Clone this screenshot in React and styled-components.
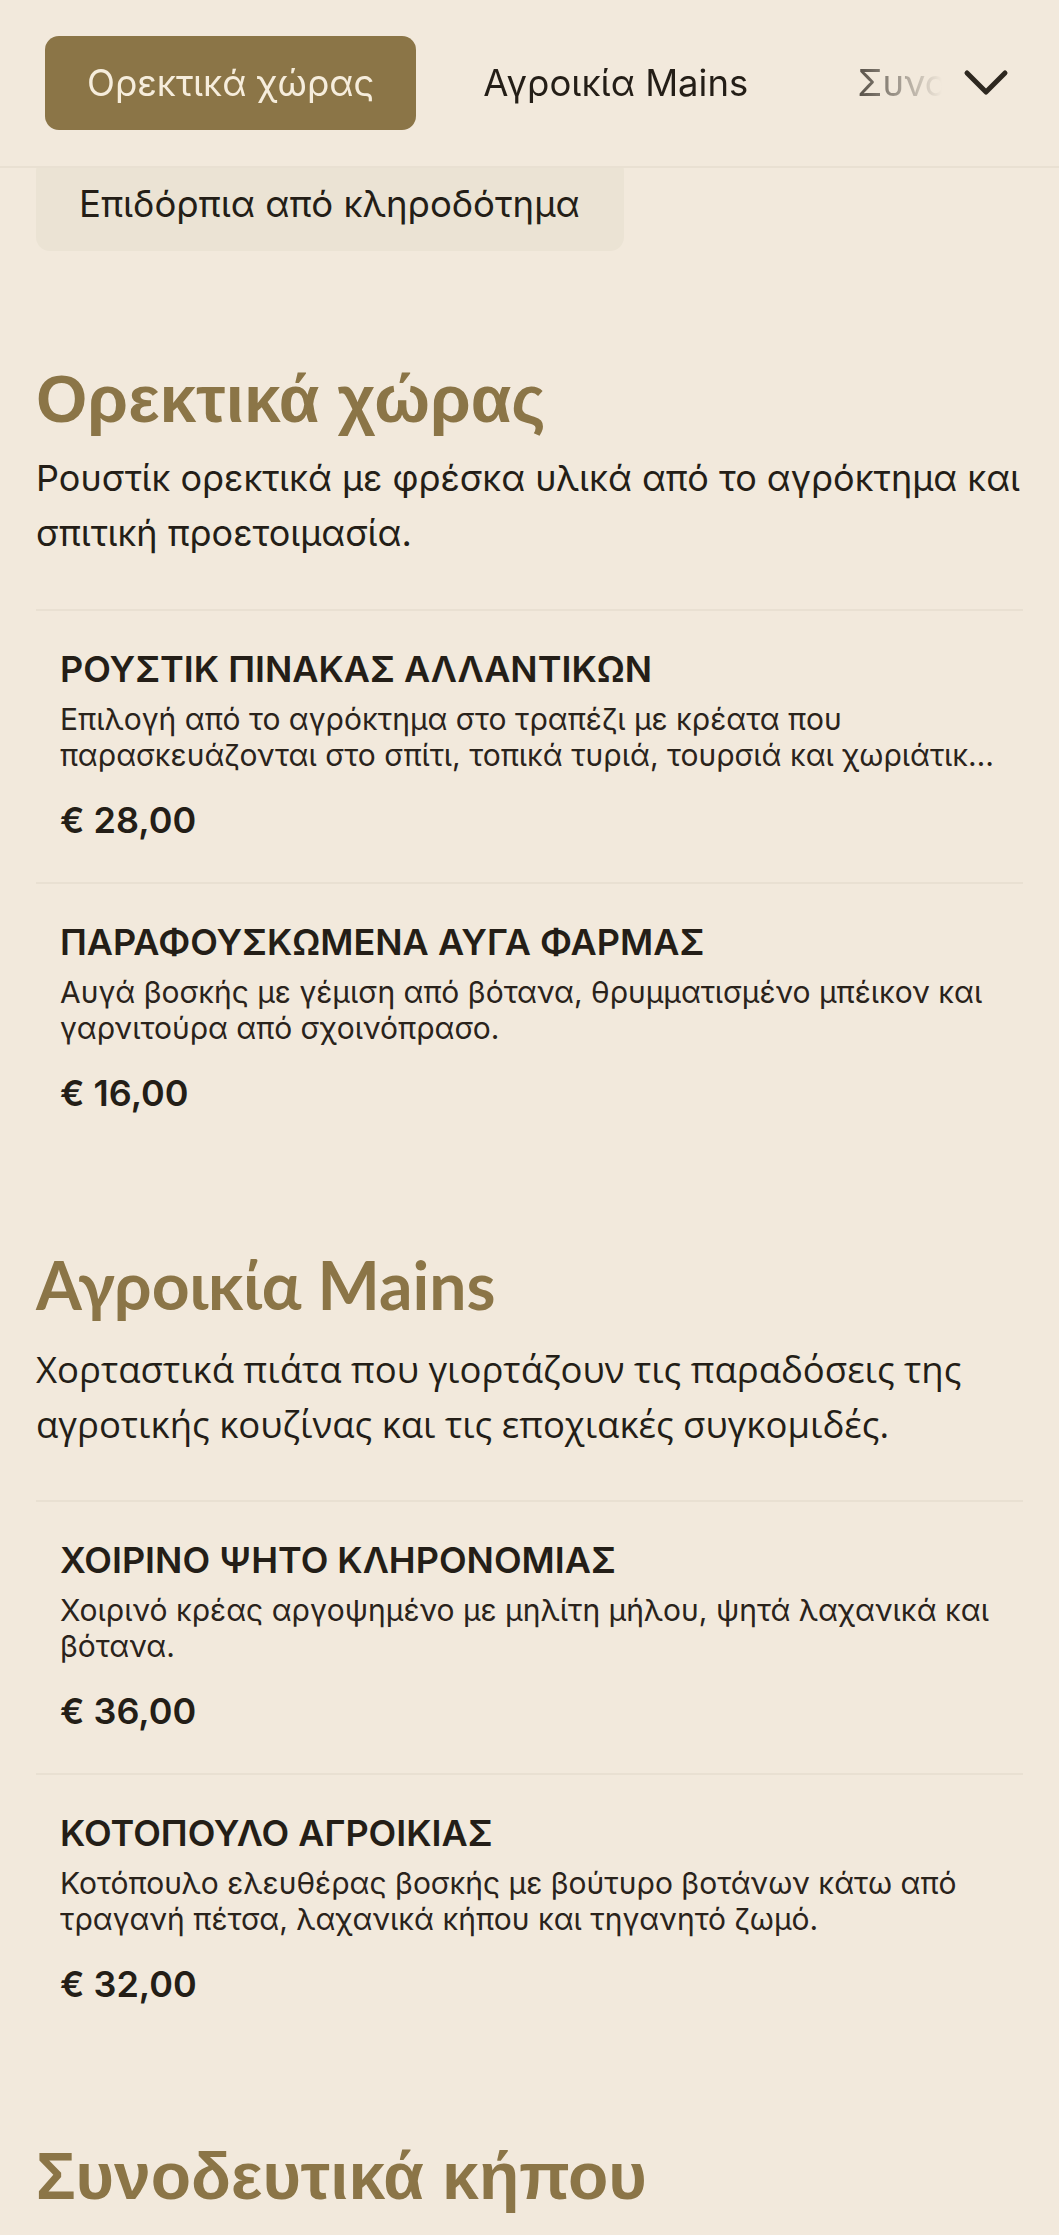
import React from "react";
import styled, { createGlobalStyle } from "styled-components";

const GlobalStyle = createGlobalStyle`
  html, body {
    margin: 0;
    padding: 0;
    background: #f2e9dc;
  }
  body {
    font-family: Inter, "Liberation Sans", "Noto Sans", sans-serif;
    color: #241e17;
    -webkit-font-smoothing: antialiased;
  }
  * { box-sizing: border-box; }
`;

const Page = styled.div`
  min-height: 2235px;
  background: #f2e9dc;
`;

const Header = styled.header`
  position: relative;
  z-index: 2;
  display: flex;
  align-items: center;
  height: 168px;
  padding: 0 43px 0 45px;
  background: #f2e9dc;
  border-bottom: 2px solid #e9e0d2;
`;

const TabStrip = styled.nav`
  flex: 1;
  min-width: 0;
  display: flex;
  gap: 25px;
  overflow: hidden;
  -webkit-mask-image: linear-gradient(to right, #000 calc(100% - 125px), transparent calc(100% - 14px));
  mask-image: linear-gradient(to right, #000 calc(100% - 125px), transparent calc(100% - 14px));
`;

const Tab = styled.button`
  flex-shrink: 0;
  height: 94px;
  padding: 0 42px;
  border: none;
  border-radius: 14px;
  font-family: Inter, "Liberation Sans", sans-serif;
  font-size: 36.5px;
  font-weight: 400;
  white-space: nowrap;
  background: ${(p) => (p.$active ? "#8b7547" : "transparent")};
  color: ${(p) => (p.$active ? "#f6eddc" : "#241e17")};
`;

const MenuButton = styled.button`
  flex-shrink: 0;
  width: 60px;
  height: 60px;
  display: flex;
  align-items: center;
  justify-content: center;
  padding: 0;
  border: none;
  background: transparent;
  color: #2e2820;
`;

const Main = styled.main`
  position: relative;
  z-index: 1;
  padding: 0 36px 40px;
`;

const OverflowPill = styled.div`
  display: inline-flex;
  align-items: center;
  height: 94px;
  margin-top: -11px;
  margin-bottom: 18px;
  padding: 0 44px 0 43px;
  border-radius: 14px;
  background: #ebe3d4;
  font-size: 36.5px;
  white-space: nowrap;
`;

const Section = styled.section`
  padding-top: 88px;
`;

const SectionTitle = styled.h2`
  margin: 0;
  font-family: ${(p) => p.$font || '"Liberation Sans", Arial, sans-serif'};
  font-size: 66px;
  line-height: 84px;
  font-weight: 700;
  color: #8b7547;
`;

const SectionIntro = styled.p`
  margin: ${(p) => p.$top || "10px"} 0 48px;
  font-family: ${(p) => p.$font || 'Inter, "Liberation Sans", sans-serif'};
  font-size: ${(p) => p.$size || "36px"};
  line-height: 55px;
  color: #241e17;
`;

const ItemList = styled.div`
  display: flex;
  flex-direction: column;
`;

const Item = styled.article`
  border-top: 2px solid #e9e0d2;
  padding: 37px 24px 40px;
`;

const ItemName = styled.h3`
  margin: 0;
  font-size: 36px;
  line-height: 43px;
  font-weight: 600;
  color: #241e17;
`;

const ItemDesc = styled.p`
  margin: 10px 0 0;
  font-size: 30px;
  line-height: 36px;
  color: #2a231b;
  display: -webkit-box;
  -webkit-line-clamp: 2;
  -webkit-box-orient: vertical;
  overflow: hidden;
`;

const Price = styled.div`
  margin-top: 26px;
  font-size: 36px;
  line-height: 43px;
  font-weight: 600;
  color: #241e17;
`;

const Chevron = () => (
  <svg width="46" height="30" viewBox="0 0 46 30" fill="none">
    <polyline
      points="4,5 23,24 42,5"
      stroke="currentColor"
      strokeWidth="5"
      strokeLinecap="round"
      strokeLinejoin="round"
    />
  </svg>
);

const sections = [
  {
    title: "Ορεκτικά χώρας",
    intro:
      "Ρουστίκ ορεκτικά με φρέσκα υλικά από το αγρόκτημα και σπιτική προετοιμασία.",
    items: [
      {
        name: "ΡΟΥΣΤΙΚ ΠΙΝΑΚΑΣ ΑΛΛΑΝΤΙΚΩΝ",
        desc:
          "Επιλογή από το αγρόκτημα στο τραπέζι με κρέατα που παρασκευάζονται στο σπίτι, τοπικά τυριά, τουρσιά και χωριάτικο ψωμί.",
        price: "€ 28,00",
      },
      {
        name: "ΠΑΡΑΦΟΥΣΚΩΜΕΝΑ ΑΥΓΑ ΦΑΡΜΑΣ",
        desc:
          "Αυγά βοσκής με γέμιση από βότανα, θρυμματισμένο μπέικον και γαρνιτούρα από σχοινόπρασο.",
        price: "€ 16,00",
      },
    ],
  },
  {
    title: "Αγροικία Mains",
    titleFont: 'Lato, "Open Sans", sans-serif',
    introFont: '"Open Sans", "Noto Sans", sans-serif',
    introSize: "36.5px",
    introTop: "15px",
    intro:
      "Χορταστικά πιάτα που γιορτάζουν τις παραδόσεις της αγροτικής κουζίνας και τις εποχιακές συγκομιδές.",
    items: [
      {
        name: "ΧΟΙΡΙΝΟ ΨΗΤΟ ΚΛΗΡΟΝΟΜΙΑΣ",
        desc: "Χοιρινό κρέας αργοψημένο με μηλίτη μήλου, ψητά λαχανικά και βότανα.",
        price: "€ 36,00",
      },
      {
        name: "ΚΟΤΟΠΟΥΛΟ ΑΓΡΟΙΚΙΑΣ",
        desc:
          "Κοτόπουλο ελευθέρας βοσκής με βούτυρο βοτάνων κάτω από τραγανή πέτσα, λαχανικά κήπου και τηγανητό ζωμό.",
        price: "€ 32,00",
      },
    ],
  },
  {
    title: "Συνοδευτικά κήπου",
    intro: "",
    items: [],
  },
];

export default function App() {
  return (
    <Page>
      <GlobalStyle />
      <Header>
        <TabStrip>
          <Tab $active>Ορεκτικά χώρας</Tab>
          <Tab>Αγροικία Mains</Tab>
          <Tab>Συνοδευτικά κήπου</Tab>
        </TabStrip>
        <MenuButton aria-label="Περισσότερα">
          <Chevron />
        </MenuButton>
      </Header>
      <Main>
        <OverflowPill>Επιδόρπια από κληροδότημα</OverflowPill>
        {sections.map((s) => (
          <Section key={s.title}>
            <SectionTitle $font={s.titleFont}>{s.title}</SectionTitle>
            {s.intro && (
              <SectionIntro $font={s.introFont} $size={s.introSize} $top={s.introTop}>
                {s.intro}
              </SectionIntro>
            )}
            {s.items.length > 0 && (
              <ItemList>
                {s.items.map((it) => (
                  <Item key={it.name}>
                    <ItemName>{it.name}</ItemName>
                    <ItemDesc>{it.desc}</ItemDesc>
                    <Price>{it.price}</Price>
                  </Item>
                ))}
              </ItemList>
            )}
          </Section>
        ))}
      </Main>
    </Page>
  );
}
